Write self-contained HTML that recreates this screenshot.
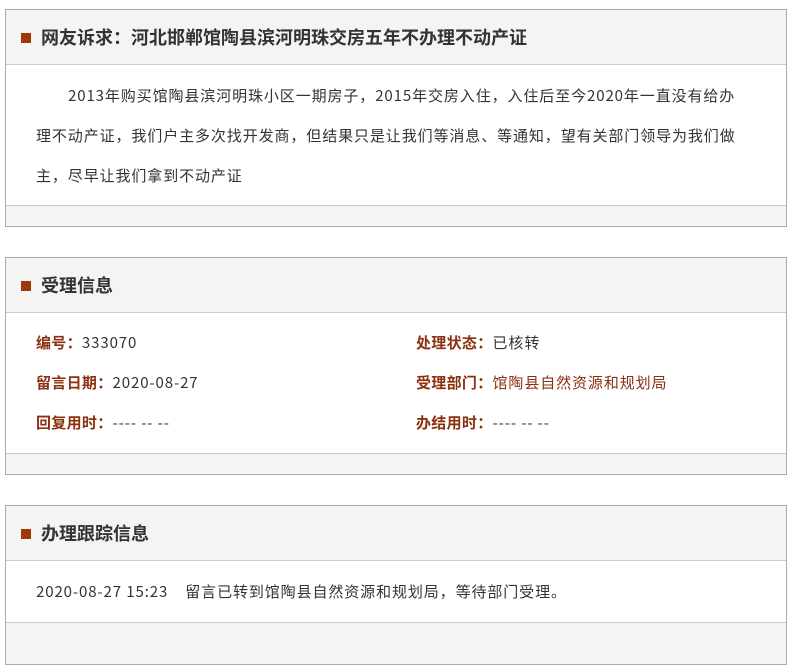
<!DOCTYPE html>
<html><head><meta charset="utf-8"><style>
*{margin:0;padding:0;box-sizing:border-box}
body{width:792px;height:637px;overflow:hidden;background:#fff;font-family:"Noto Sans CJK SC","Liberation Sans",sans-serif;color:#333;position:relative}
.box{position:absolute;left:5px;width:782px;border:1px solid #aaa;background:#f4f4f4}
.hd{height:55px;border-bottom:1px solid #ccc;position:relative}
.hd i{position:absolute;left:15px;top:23px;width:10px;height:10px;background:#a0380c}
.hd b{position:absolute;left:35px;top:14px;font-size:18px;line-height:26px;color:#333}
.bd{background:#fff;border-bottom:1px solid #ccc;position:relative}
.p{font-size:15px;line-height:40px;padding:11px 0 0 30px;white-space:nowrap;letter-spacing:0.9px}
.r{position:absolute;font-size:15px;line-height:20px;white-space:nowrap;letter-spacing:0.9px}
.l{color:#8b3010;font-weight:bold;letter-spacing:0.3px}
.red{color:#8b3010}
</style></head><body>
<div class="box" style="top:9px;height:218px">
<div class="hd"><i></i><b>网友诉求：河北邯郸馆陶县滨河明珠交房五年不办理不动产证</b></div>
<div class="bd" style="height:141px"><div class="p"><span style="padding-left:32px">2013年购买馆陶县滨河明珠小区一期房子，2015年交房入住，入住后至今2020年一直没有给办</span><br>理不动产证，我们户主多次找开发商，但结果只是让我们等消息、等通知，望有关部门领导为我们做<br>主，尽早让我们拿到不动产证</div></div>
</div>
<div class="box" style="top:257px;height:218px">
<div class="hd"><i></i><b>受理信息</b></div>
<div class="bd" style="height:141px">
<div class="r" style="left:30px;top:20px"><span class="l">编号：</span>333070</div>
<div class="r" style="left:410px;top:20px"><span class="l">处理状态：</span>已核转</div>
<div class="r" style="left:30px;top:60px"><span class="l">留言日期：</span>2020-08-27</div>
<div class="r" style="left:410px;top:60px"><span class="l">受理部门：</span><span class="red">馆陶县自然资源和规划局</span></div>
<div class="r" style="left:30px;top:100px"><span class="l">回复用时：</span>---- -- --</div>
<div class="r" style="left:410px;top:100px"><span class="l">办结用时：</span>---- -- --</div>
</div>
</div>
<div class="box" style="top:505px;height:160px">
<div class="hd"><i></i><b>办理跟踪信息</b></div>
<div class="bd" style="height:62px">
<div class="r" style="left:30px;top:21px">2020-08-27 15:23&nbsp;&nbsp;&nbsp;&nbsp;留言已转到馆陶县自然资源和规划局，等待部门受理。</div>
</div>
</div>
</body></html>
